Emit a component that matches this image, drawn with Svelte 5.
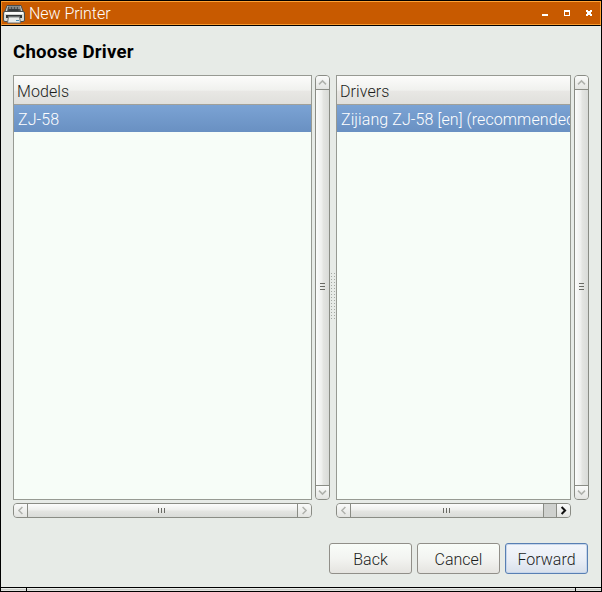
<script>
  const panes = [
    { title: 'Models', item: 'ZJ-58', width: 299, overflow: false },
    { title: 'Drivers', item: 'Zijiang ZJ-58 [en] (recommended)', width: 235, overflow: true }
  ];
  const dots = Array.from({ length: 16 }, (_, i) => i * 3);
</script>

{#snippet arrow(dir, active)}
  <svg class="arrow {dir}" class:active width="13" height="13" viewBox="0 0 13 13">
    <path d="M3 8.4 L6.5 4.9 L10 8.4" />
  </svg>
{/snippet}

<div class="window">
  <header class="titlebar">
    <svg class="printer" width="22" height="20" viewBox="0 0 22 20">
      <path d="M4 1.5h14l2.5 7h-19z" fill="#c9cdca" stroke="#4a4c4b" />
      <path d="M5 2.5h12l1 5H4z" fill="#4b4f50" />
      <path d="M6 4h8" stroke="#a9aeaf" stroke-dasharray="2 1" />
      <path d="M5.5 6h10" stroke="#25292a" />
      <path d="M15 4h2" stroke="#c0c5c6" />
      <path d="M.5 9Q.5 7.5 2 7.5H20Q21.5 7.5 21.5 9V16Q21.5 17.5 20 17.5H2Q.5 17.5 .5 16z" fill="#d6d9d6" stroke="#4a4d4c" />
      <path d="M2 9h18" stroke="#fbfbfa" stroke-width="2" />
      <path d="M3 11h16v3H3z" fill="#303435" />
      <path d="M5.5 12.5h11l1 6.5h-13z" fill="#e9ecea" stroke="#6a6e6e" />
      <path d="M6 13.5h10" stroke="#b4b9b8" />
      <path d="M13 16.5h3" stroke="#4b91bb" />
    </svg>
    <span class="title">New Printer</span>
    <svg class="controls" width="50" height="9" viewBox="0 0 50 9" shape-rendering="crispEdges">
      <path d="M0 6h6v2H0z" fill="#fff" />
      <path d="M22 2h6v6h-6z M23 4v3h4V4z" fill="#fff" fill-rule="evenodd" />
      <path d="M44 2h2v1h2v-1h2v2h-1v2h1v2h-2v-1h-2v1h-2v-2h1v-2h-1z" fill="#fff" />
    </svg>
  </header>
  <main>
    <h1>Choose Driver</h1>
    <div class="panes">
      {#each panes as pane, i}
        {#if i}
          <div class="splitter">
            <svg width="4" height="46" viewBox="0 0 4 46" shape-rendering="crispEdges">
              {#each dots as y}<path d="M0 {y}h1v1h-1z M3 {y}h1v1h-1z" fill="#a5a9a4" />{/each}
            </svg>
          </div>
        {/if}
        <section>
          <div class="upper">
            <div class="list" style="width:{pane.width}px">
              <div class="head">{pane.title}</div>
              <div class="row">{pane.item}</div>
            </div>
            <div class="bar vertical">
              <div class="step">{@render arrow('up', false)}</div>
              <div class="thumb"><span class="grip"></span></div>
              <div class="step">{@render arrow('down', false)}</div>
            </div>
          </div>
          <div class="bar horizontal" style="width:{pane.width}px">
            <div class="step">{@render arrow('left', false)}</div>
            <div class="thumb"><span class="grip"></span></div>
            {#if pane.overflow}<div class="trough"></div>{/if}
            <div class="step">{@render arrow('right', pane.overflow)}</div>
          </div>
        </section>
      {/each}
    </div>
    <div class="actions">
      <button>Back</button>
      <button>Cancel</button>
      <button class="primary">Forward</button>
    </div>
  </main>
  <footer><span></span><span class="mid"></span><span></span></footer>
</div>

<style>
  .window {
    box-sizing: border-box;
    width: 602px;
    height: 592px;
    border: 1px solid #000;
    background: #e7ebe7;
    display: flex;
    flex-direction: column;
    overflow: hidden;
    font: 300 16px/20px Roboto, "Liberation Sans", sans-serif;
    color: #1b1d1b;
  }
  .titlebar {
    box-sizing: border-box;
    height: 25px;
    flex: none;
    display: flex;
    align-items: center;
    background: #c85a00;
    border: 1px solid #ffa235;
    border-left-color: #ec8b24;
    border-bottom: 1px solid #000;
    box-shadow: inset 0 -1px #f79a31;
    color: #fff;
    padding: 0 8px 0 1px;
  }
  .printer { flex: none; }
  .controls { margin-bottom: 2px; }
  .title { margin-left: 4px; flex: 1; letter-spacing: -0.05px; }
  main {
    flex: 1;
    display: flex;
    flex-direction: column;
    padding: 16px 12px 0;
    min-height: 0;
  }
  h1 {
    margin: 0 0 12px;
    font: 700 18.6px/21px Roboto, sans-serif;
    letter-spacing: 0.24px;
    color: #000;
  }
  .panes { display: flex; height: 443px; }
  .upper { display: flex; gap: 3px; height: 425px; }
  .list {
    box-sizing: border-box;
    border: 1px solid #979a93;
    background: #f7fdf8;
    overflow: hidden;
    white-space: nowrap;
    letter-spacing: 0.09px;
  }
  .head {
    height: 28px;
    line-height: 31px;
    padding-left: 3px;
    border-bottom: 1px solid #a0a099;
    background: linear-gradient(#fcfcfb, #f0f1ee 50%, #e8e7e4 55%, #e0e0dc);
  }
  .row {
    height: 27px;
    line-height: 29px;
    padding-left: 4px;
    color: #fff;
    background: linear-gradient(#7ba3d4, #6990c2);
  }
  .bar {
    box-sizing: border-box;
    display: flex;
    border: 1px solid #8a8c85;
    border-radius: 4px;
    overflow: hidden;
    background: #cfd1ce;
  }
  .vertical { width: 15px; flex-direction: column; }
  .horizontal { height: 15px; margin-top: 3px; }
  .step {
    width: 13px;
    height: 13px;
    flex: none;
    background: linear-gradient(#fafbfa, #e3e4e1);
  }
  .thumb {
    flex: 1;
    display: flex;
    align-items: center;
    justify-content: center;
  }
  .vertical .thumb {
    border: solid #8a8c85;
    border-width: 1px 0;
    padding-bottom: 2px;
    background: linear-gradient(90deg, #fcfdfc, #eeefed 45%, #e4e5e2 55%, #d9dbd8);
  }
  .horizontal .thumb {
    border: solid #8a8c85;
    border-width: 0 1px;
    padding-right: 2px;
    background: linear-gradient(#fcfdfc, #eeefed 45%, #e4e5e2 55%, #d9dbd8);
  }
  .vertical .grip {
    width: 5px;
    height: 7px;
    background: repeating-linear-gradient(#696a64 0 1px, transparent 1px 3px);
  }
  .horizontal .grip {
    width: 7px;
    height: 5px;
    background: repeating-linear-gradient(90deg, #696a64 0 1px, transparent 1px 3px);
  }
  .trough {
    box-sizing: border-box;
    width: 13px;
    border-right: 1px solid #8a8c85;
    background: #cfd1ce;
  }
  .arrow { display: block; fill: none; stroke: #b0b2ad; stroke-width: 1.5; }
  .arrow.active { stroke: #111; stroke-width: 2; }
  .down { transform: rotate(180deg); }
  .left { transform: rotate(-90deg); }
  .right { transform: rotate(90deg); }
  .splitter {
    width: 6px;
    height: 425px;
    flex: none;
    display: flex;
    align-items: center;
    justify-content: center;
    padding-top: 17px;
    box-sizing: border-box;
  }
  .splitter svg { flex: none; }
  section { flex: none; }
  .actions {
    display: flex;
    justify-content: flex-end;
    gap: 5px;
    margin: 25px 1px 0 0;
  }
  button {
    box-sizing: border-box;
    width: 83px;
    height: 31px;
    padding: 2px 0 0;
    border: 1px solid #918f89;
    border-radius: 3px;
    background: linear-gradient(#f9fdf9, #f3f4f1 50%, #e5e4e0);
    font: inherit;
    color: inherit;
  }
  .primary {
    border-color: #587fb3;
    background: linear-gradient(#f3f6fb, #e9eef6 55%, #d8e0eb);
    box-shadow: inset 0 0 0 1px #c7d6eb;
  }
  footer {
    height: 3px;
    flex: none;
    display: flex;
    border-top: 1px solid #000;
    background: linear-gradient(#e7ebe7 1px, #cbcdc9 1px 2px, #e0e2de 2px);
  }
  footer span { width: 25px; }
  footer .mid { flex: 1; border: solid #000; border-width: 0 1px; }
</style>
